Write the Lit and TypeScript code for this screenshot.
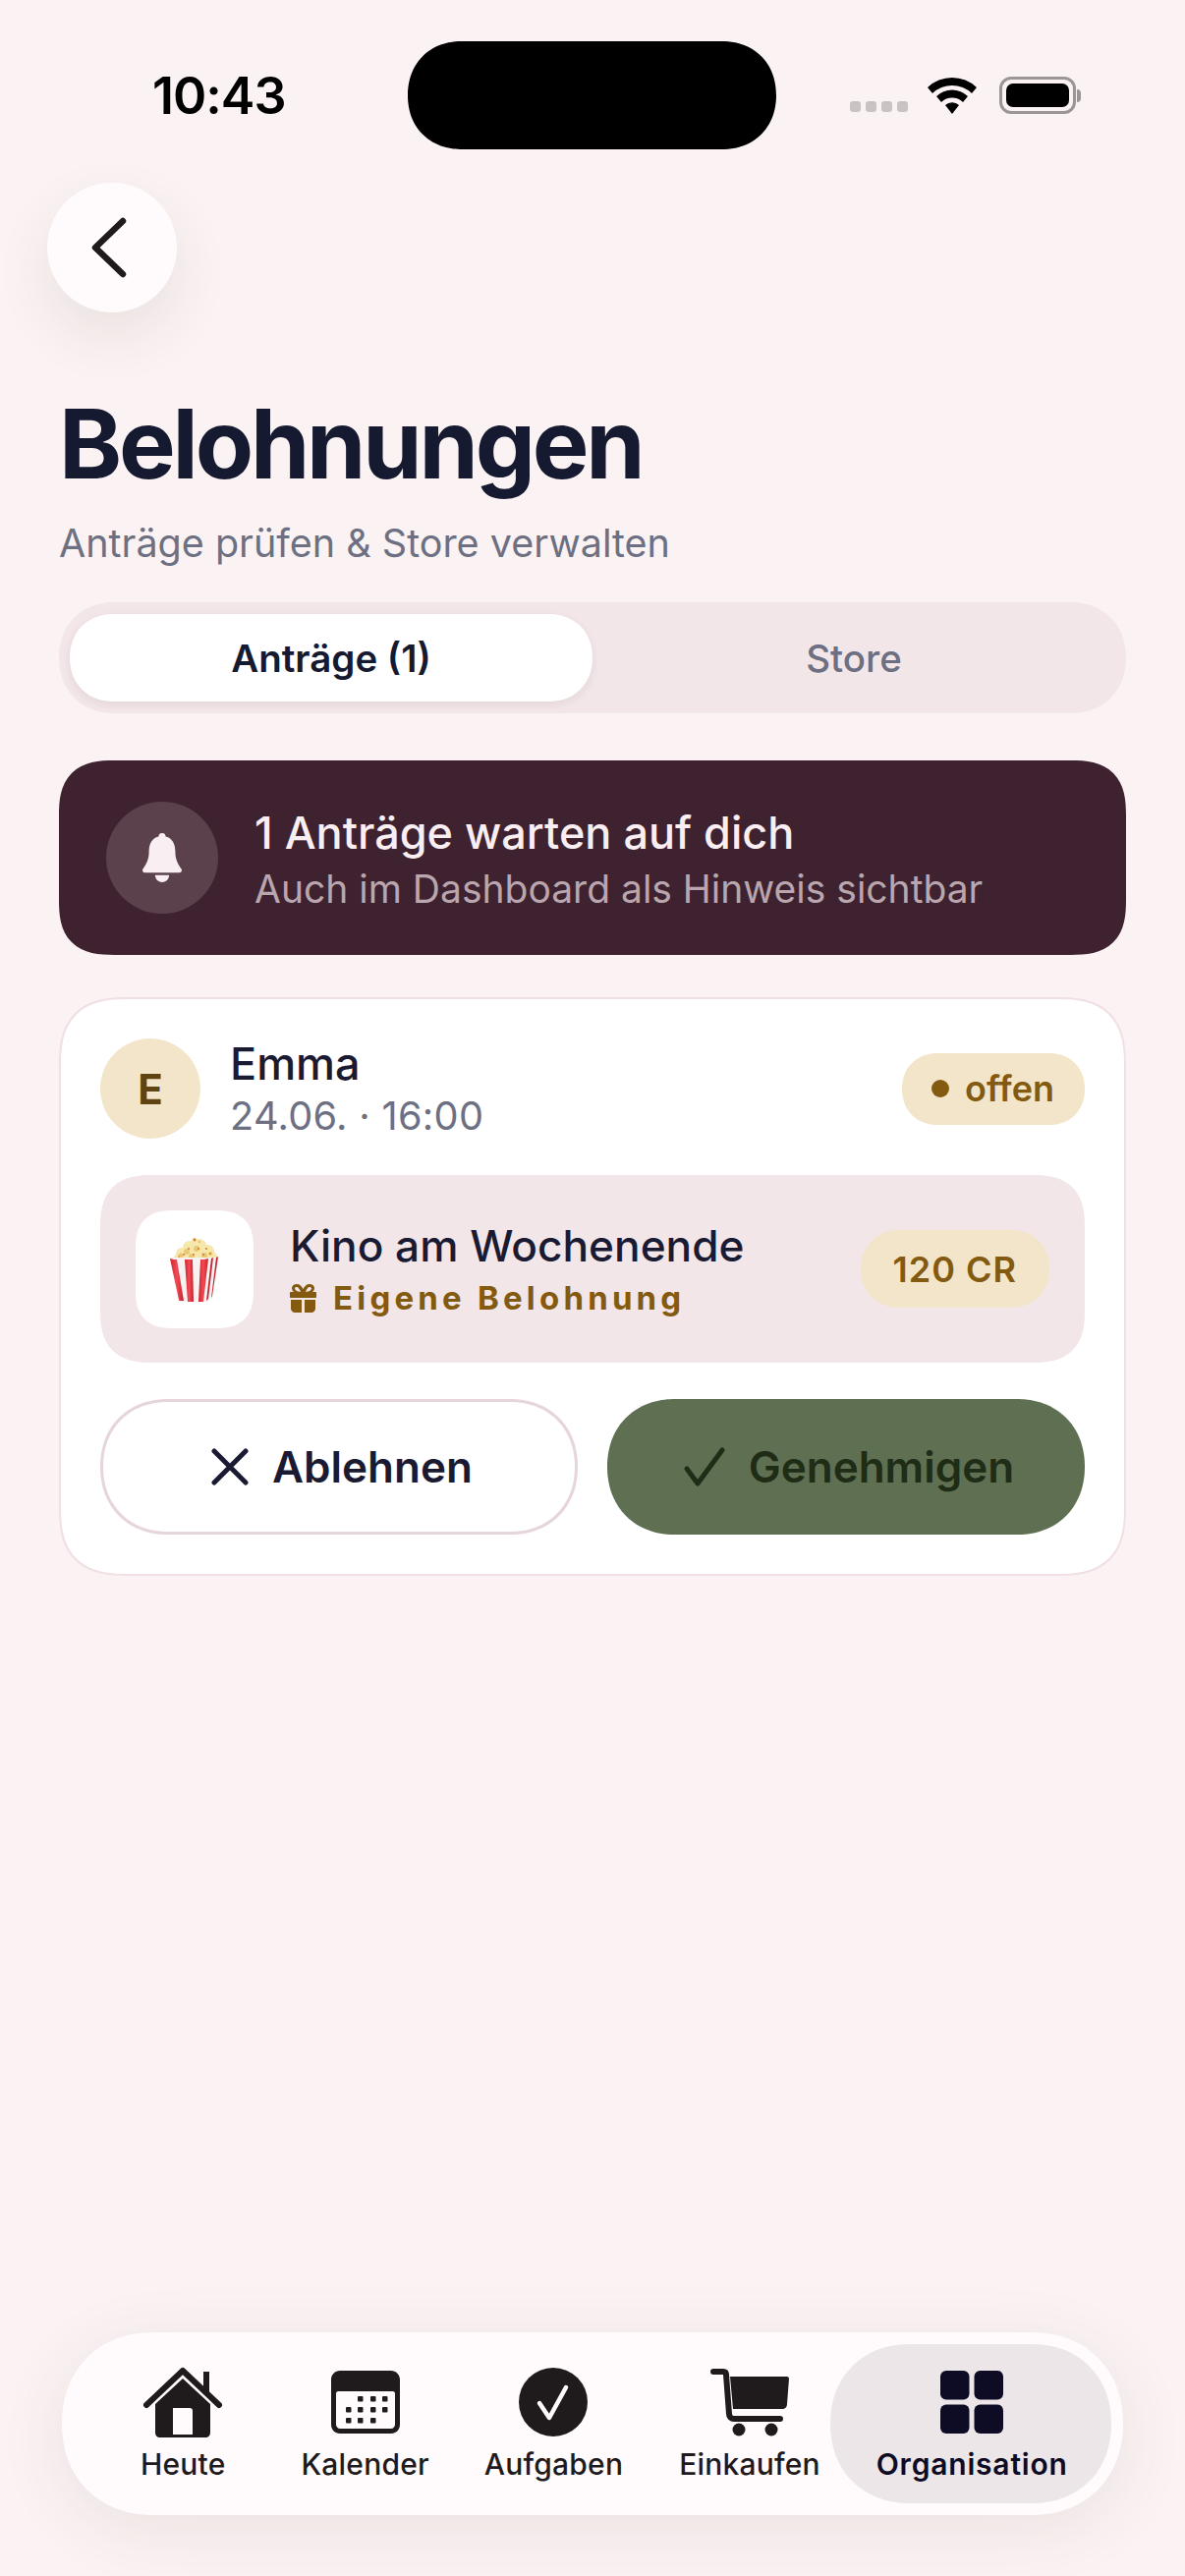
import {html, css, LitElement, svg} from 'lit';
import {customElement} from 'lit/decorators.js';

const navItems = [
  {
    label: 'Heute',
    cls: 'heute',
    icon: svg`<svg width="82" height="72" viewBox="0 0 82 72"><path d="M4 38 41 3l37 35" fill="none" stroke="#1f1b1c" stroke-width="6" stroke-linecap="round" stroke-linejoin="round" transform="translate(0 1)"/><path d="M62 5h6v22l-6-6z" fill="#1f1b1c"/><path fill-rule="evenodd" d="M41 12 69 38v29c0 3-2 5-5 5H18c-3 0-5-2-5-5V38zM31 42v27h20V45c0-2-1-3-3-3z" fill="#1f1b1c"/></svg>`,
  },
  {
    label: 'Kalender',
    cls: 'kalender',
    icon: svg`<svg width="70" height="64" viewBox="0 0 70 64"><path fill-rule="evenodd" d="M9 0h52c5 0 9 4 9 9v46c0 5-4 9-9 9H9c-5 0-9-4-9-9V9c0-5 4-9 9-9zm-2 21c-1 0-2 1-2 2v32c0 2 2 4 4 4h52c2 0 4-2 4-4V23c0-1-1-2-2-2z" fill="#1f1b1c"/>${[[27, 26], [40, 26], [52, 26], [15, 37], [27, 37], [40, 37], [52, 37], [15, 48], [27, 48], [40, 48]].map(([x, y]) => svg`<rect x=${x} y=${y} width="5.5" height="5.5" rx="1" fill="#1f1b1c"/>`)}</svg>`,
  },
  {
    label: 'Aufgaben',
    cls: 'aufgaben',
    icon: svg`<svg width="70" height="70" viewBox="0 0 70 70"><circle cx="35" cy="35" r="35" fill="#1f1b1c"/><path d="M21 36l10 15 17-31" fill="none" stroke="#fffbfc" stroke-width="4.5" stroke-linecap="round" stroke-linejoin="round"/></svg>`,
  },
  {
    label: 'Einkaufen',
    cls: 'einkaufen',
    icon: svg`<svg width="80" height="70" viewBox="0 0 80 70"><path d="M3 4h10c2 0 3 1 3 3l3 40c0 3 2 5 5 5h47" fill="none" stroke="#1f1b1c" stroke-width="6" stroke-linecap="round" stroke-linejoin="round"/><path d="M20 9h58c1 0 2 1 2 2l-2 26c0 3-2 5-5 5H23z" fill="#1f1b1c"/><circle cx="29" cy="63" r="6.5" fill="#1f1b1c"/><circle cx="62" cy="63" r="6.5" fill="#1f1b1c"/></svg>`,
  },
  {
    label: 'Organisation',
    cls: 'organisation active',
    icon: svg`<svg width="64" height="64" viewBox="0 0 64 64"><g fill="#0e0c24"><rect width="29.5" height="29.5" rx="6"/><rect x="34.500" width="29.5" height="29.5" rx="6"/><rect y="34.500" width="29.5" height="29.5" rx="6"/><rect x="34.500" y="34.500" width="29.5" height="29.5" rx="6"/></g></svg>`,
  },
];

const kernels = [[12, 17, 6], [20, 11, 7], [30, 9, 7], [38, 15, 7], [44, 20, 4], [7, 21, 3], [25, 18, 8], [15, 20, 5], [35, 20, 5], [25, 4, 3]];
const shades = [[17, 15, 3], [27, 12, 3], [35, 19, 3], [22, 20, 3], [11, 19, 2.5], [41, 17, 2]];
const specks = [[25, 3, 1.4], [19, 12, 1], [29, 12, 1.1], [37, 12, 1], [14, 18, 1], [24, 18, 1], [34, 18, 1], [9, 20, .8], [30, 5, .8], [41, 17, .9]];

const popcorn = svg`<svg width="50" height="66" viewBox="0 0 50 66">
  <defs>
    <linearGradient id="red" x1="0" x2="1"><stop offset="0" stop-color="#cf2430"/><stop offset=".5" stop-color="#f24a55"/><stop offset="1" stop-color="#c81f2b"/></linearGradient>
  </defs>
  <g fill="#f6e7ab">${kernels.map(([x, y, r]) => svg`<circle cx=${x} cy=${y} r=${r}/>`)}</g>
  <g fill="#e9c873">${shades.map(([x, y, r]) => svg`<circle cx=${x} cy=${y} r=${r}/>`)}</g>
  <g fill="#d9792c">${specks.map(([x, y, r]) => svg`<circle cx=${x} cy=${y} r=${r}/>`)}</g>
  <path d="M0 21h47l3-1-7 41-5 5H12c-2 0-3-1-3-2z" fill="#f7f2f2"/>
  <path d="M0 22c3 1 5 1 7 1l7 42h-4c-1 0-1-1-1-1z" fill="url(#red)"/>
  <path d="M15 23c3 0 5 0 8 0l1 43h-6z" fill="url(#red)"/>
  <path d="M31 23c3 0 5 0 8-1l-5 44h-5z" fill="url(#red)"/>
  <path d="M42 22l2-1-5 42-2 2zM47 21l2-1-6 40-1 2z" fill="#c42531"/>
</svg>`;

@customElement('app-root')
export class AppRoot extends LitElement {
  static styles = css`
    :host {
      display: block;
      font-family: Inter, "Noto Sans", sans-serif;
      color: #1a1b33;
    }

    .page {
      display: flex;
      flex-direction: column;
      box-sizing: border-box;
      min-height: 2622px;
      background: #fbf3f3;
      overflow: hidden;
    }

    .status {
      display: flex;
      align-items: center;
      height: 110px;
      margin-top: 42px;
    }

    .time {
      width: 415px;
      padding-left: 155px;
      box-sizing: border-box;
      font-size: 52px;
      font-weight: 600;
      letter-spacing: -1px;
      color: #000;
    }

    .island {
      width: 375px;
      height: 110px;
      border-radius: 55px;
      corner-shape: superellipse(1.1);
      background: #000;
    }

    .sys {
      display: flex;
      align-items: center;
      margin-left: 75px;
      gap: 20px;
    }

    .signal {
      display: flex;
      gap: 5px;
      align-self: flex-end;
      margin-bottom: 2px;
    }

    .signal i {
      width: 11px;
      height: 11px;
      border-radius: 3px;
      background: #c9c3c4;
    }

    .battery {
      display: flex;
      align-items: center;
      margin-left: 3px;
    }

    .battery-body {
      box-sizing: border-box;
      width: 78px;
      height: 38px;
      padding: 4px;
      border: 3px solid #9b9596;
      border-radius: 12px;
    }

    .battery-body div {
      height: 100%;
      border-radius: 7px;
      background: #000;
    }

    .battery-tip {
      width: 4px;
      height: 13px;
      margin-left: 1px;
      border-radius: 0 4px 4px 0;
      background: #9b9596;
    }

    .back {
      display: flex;
      align-items: center;
      justify-content: center;
      width: 132px;
      height: 132px;
      margin: 34px 0 0 48px;
      padding-right: 6px;
      box-sizing: border-box;
      border-radius: 50%;
      background: #fffbfc;
      box-shadow: 0 24px 60px rgba(60, 40, 45, 0.09);
    }

    .content {
      display: flex;
      flex-direction: column;
      padding: 0 60px;
    }

    h1 {
      margin: 76px 0 0;
      font-size: 97px;
      line-height: 116px;
      font-weight: 700;
      letter-spacing: -3.2px;
      color: #161a30;
    }

    .sub {
      margin-top: 20px;
      font-size: 39.5px;
      line-height: 46px;
      color: #6d7082;
    }

    .tabs {
      display: grid;
      grid-template-columns: 1fr 1fr;
      height: 113px;
      margin-top: 37px;
      padding: 12px 11px;
      box-sizing: border-box;
      border-radius: 57px;
      corner-shape: superellipse(1.1);
      background: #f2e6e8;
    }

    .tab {
      display: flex;
      align-items: center;
      justify-content: center;
      border-radius: 45px;
      corner-shape: superellipse(1.1);
      font-size: 38.5px;
      font-weight: 500;
      color: #6d7082;
    }

    .tab.on {
      background: #fff;
      color: #161a30;
      font-weight: 600;
      box-shadow: 0 3px 8px rgba(60, 30, 40, 0.08);
    }

    .banner {
      display: flex;
      align-items: center;
      gap: 37px;
      height: 198px;
      margin-top: 48px;
      padding-left: 48px;
      border-radius: 56px;
      corner-shape: superellipse(1.4);
      background: #3f2230;
    }

    .bell {
      display: flex;
      align-items: center;
      justify-content: center;
      width: 114px;
      height: 114px;
      border-radius: 50%;
      background: #5a414c;
    }

    .banner-text {
      padding-top: 4px;
    }

    .banner-title {
      font-size: 45px;
      line-height: 56px;
      font-weight: 500;
      color: #f9eef1;
    }

    .banner-sub {
      margin-top: 4px;
      font-size: 39px;
      line-height: 50px;
      color: #b9a6ae;
    }

    .card {
      display: flex;
      flex-direction: column;
      box-sizing: border-box;
      height: 589px;
      margin-top: 43px;
      padding: 40px 40px 0;
      border: 2px solid #f0dfe4;
      border-radius: 70px;
      corner-shape: superellipse(1.4);
      background: #fff;
    }

    .person {
      display: flex;
      align-items: center;
      gap: 30px;
    }

    .avatar {
      display: flex;
      align-items: center;
      justify-content: center;
      width: 102px;
      height: 102px;
      border-radius: 50%;
      background: #f3e5c9;
      font-size: 42px;
      font-weight: 700;
      color: #5f4310;
    }

    .who {
      flex: 1;
      padding-top: 1px;
    }

    .name {
      font-size: 45px;
      line-height: 50px;
      font-weight: 500;
    }

    .date {
      margin-top: 5px;
      font-size: 39.700px;
      line-height: 46px;
      letter-spacing: 0.3px;
      color: #6d7082;
    }

    .pill {
      display: flex;
      align-items: center;
      gap: 16px;
      height: 73px;
      padding: 0 31px 0 30px;
      border-radius: 37px;
      corner-shape: superellipse(1.1);
      background: #f3e5c9;
      font-size: 36px;
      font-weight: 600;
      color: #835a10;
    }

    .dot {
      width: 18px;
      height: 18px;
      border-radius: 50%;
      background: #835a10;
    }

    .reward {
      display: flex;
      align-items: center;
      height: 191px;
      margin-top: 37px;
      padding: 0 36px;
      border-radius: 54px;
      corner-shape: superellipse(1.4);
      background: #f2e6e8;
    }

    .tile {
      display: flex;
      align-items: center;
      justify-content: center;
      width: 120px;
      height: 120px;
      margin-right: 37px;
      border-radius: 40px;
      corner-shape: superellipse(1.4);
      background: #fff;
    }

    .reward-text {
      flex: 1;
    }

    .reward-name {
      font-size: 44.2px;
      line-height: 56px;
      font-weight: 500;
    }

    .reward-kind {
      display: flex;
      align-items: center;
      gap: 17px;
      margin-top: 3px;
      font-size: 33px;
      line-height: 44px;
      font-weight: 700;
      letter-spacing: 4.2px;
      color: #835a10;
    }

    .cost {
      display: flex;
      align-items: center;
      height: 79px;
      padding: 0 33px;
      border-radius: 40px;
      corner-shape: superellipse(1.1);
      background: #f3e5c9;
      font-size: 36px;
      font-weight: 600;
      letter-spacing: 1px;
      color: #835a10;
    }

    .actions {
      display: grid;
      grid-template-columns: 486px 486px;
      justify-content: space-between;
      margin-top: 37px;
    }

    .btn {
      display: flex;
      align-items: center;
      justify-content: center;
      gap: 24px;
      box-sizing: border-box;
      height: 138px;
      padding-left: 6px;
      border-radius: 69px;
      corner-shape: superellipse(1.1);
      font-size: 44px;
      font-weight: 600;
    }

    .btn.no {
      border: 3px solid #e6d5da;
      background: #fff;
    }

    .btn.yes {
      background: #5f7052;
      color: #1f2c16;
    }

    .nav {
      display: flex;
      align-items: center;
      box-sizing: border-box;
      width: 1080px;
      height: 186px;
      margin: auto 0 62px 63px;
      padding: 0 12px 0 51px;
      border-radius: 93px;
      corner-shape: superellipse(1.1);
      background: #fffbfc;
      box-shadow: 0 14px 70px rgba(70, 45, 50, 0.09);
    }

    .item {
      display: flex;
      flex-direction: column;
      align-items: center;
      justify-content: flex-end;
      box-sizing: border-box;
      height: 162px;
      padding: 0 28px 21px;
      font-size: 30px;
      line-height: 38px;
      font-weight: 500;
      letter-spacing: 0.2px;
      color: #1f1b1c;
    }

    .icon {
      display: flex;
      align-items: center;
      justify-content: center;
      height: 72px;
      margin-bottom: 8px;
    }

    .item.heute {
      padding: 0 49px 21px 29px;
    }

    .item.einkaufen {
      padding: 0 10px 21px 29px;
    }

    .item.active {
      padding: 0 44px 21px 47px;
      border-radius: 81px;
      corner-shape: superellipse(1.1);
      background: #ece6e8;
      font-weight: 600;
      letter-spacing: 0.8px;
      color: #0e0c24;
    }
  `;

  render() {
    return html`
      <div class="page">
        <div class="status">
          <div class="time">10:43</div>
          <div class="island"></div>
          <div class="sys">
            <div class="signal"><i></i><i></i><i></i><i></i></div>
            <svg width="50" height="38" viewBox="0 0 50 38">
              <path d="M0 11a36 36 0 0 1 50 0l-5 6a29 29 0 0 0-40 0z" fill="#000"/>
              <path d="M9 20a23 23 0 0 1 32 0l-5 6a16 16 0 0 0-22 0z" fill="#000"/>
              <path d="M18 29a10 10 0 0 1 14 0l-7 9z" fill="#000"/>
            </svg>
            <div class="battery">
              <div class="battery-body"><div></div></div>
              <div class="battery-tip"></div>
            </div>
          </div>
        </div>

        <div class="back">
          <svg width="44" height="64" viewBox="0 0 44 64">
            <path d="M36 5 8 32l28 27" fill="none" stroke="#1f1b1c" stroke-width="6.5" stroke-linecap="round" stroke-linejoin="round"/>
          </svg>
        </div>

        <div class="content">
          <h1>Belohnungen</h1>
          <div class="sub">Anträge prüfen &amp; Store verwalten</div>

          <div class="tabs">
            <div class="tab on">Anträge (1)</div>
            <div class="tab">Store</div>
          </div>

          <div class="banner">
            <div class="bell">
              <svg width="44" height="50" viewBox="0 0 46 56">
                <path d="M23 0c3 0 4 2 4 4 8 2 11 9 11 17 0 9 3 14 7 20 1 2 0 4-2 4H3c-2 0-3-2-2-4 4-6 7-11 7-20 0-8 3-15 11-17 0-2 1-4 4-4z" fill="#f9eef1"/>
                <path d="M15 48h16c0 4-3 8-8 8s-8-4-8-8z" fill="#f9eef1"/>
              </svg>
            </div>
            <div class="banner-text">
              <div class="banner-title">1 Anträge warten auf dich</div>
              <div class="banner-sub">Auch im Dashboard als Hinweis sichtbar</div>
            </div>
          </div>

          <div class="card">
            <div class="person">
              <div class="avatar">E</div>
              <div class="who">
                <div class="name">Emma</div>
                <div class="date">24.06. · 16:00</div>
              </div>
              <div class="pill"><span class="dot"></span>offen</div>
            </div>

            <div class="reward">
              <div class="tile">${popcorn}</div>
              <div class="reward-text">
                <div class="reward-name">Kino am Wochenende</div>
                <div class="reward-kind">
                  <svg width="27" height="29" viewBox="0 0 27 29">
                    <path fill-rule="evenodd" d="M7 0c3 0 5 2 6.500 5C15 2 17 0 20 0c3 0 5 2 5 4 0 2-1 3-2 4h3c.6 0 1 .4 1 1v4c0 .6-.4 1-1 1H1c-.6 0-1-.4-1-1V9c0-.6.4-1 1-1h3C3 7 2 6 2 4c0-2 2-4 5-4zm0 3C6 3 5 3.500 5 4.500 5 6 7 7.500 11 8 10 5 8.500 3 7 3zm13 0c-1.500 0-3 2-4 5 4-.5 6-2 6-3.500C22 3.500 21 3 20 3z" fill="#835a10"/>
                    <path d="M1 16h11v13H5c-2 0-4-2-4-4zM15 16h11v9c0 2-2 4-4 4h-7z" fill="#835a10"/>
                  </svg>
                  Eigene Belohnung
                </div>
              </div>
              <div class="cost">120 CR</div>
            </div>

            <div class="actions">
              <div class="btn no">
                <svg width="38" height="38" viewBox="0 0 38 38">
                  <path d="M3 3l32 32M35 3 3 35" fill="none" stroke="#1a1b33" stroke-width="5" stroke-linecap="round"/>
                </svg>
                Ablehnen
              </div>
              <div class="btn yes">
                <svg width="42" height="40" viewBox="0 0 42 40">
                  <path d="M3 22l11 15L39 3" fill="none" stroke="#1f2c16" stroke-width="5" stroke-linecap="round" stroke-linejoin="round"/>
                </svg>
                Genehmigen
              </div>
            </div>
          </div>
        </div>

        <div class="nav">
          ${navItems.map(item => html`
            <div class="item ${item.cls}">
              <div class="icon">${item.icon}</div>
              ${item.label}
            </div>
          `)}
        </div>
      </div>
    `;
  }
}
